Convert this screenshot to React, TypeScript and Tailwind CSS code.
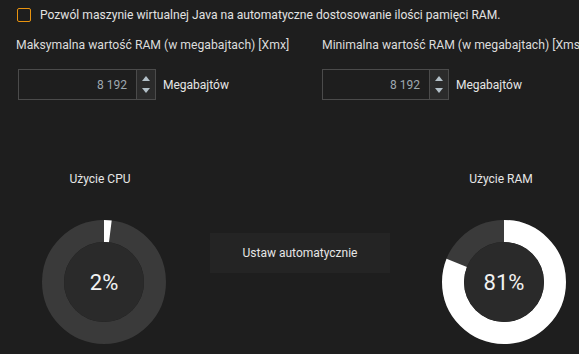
import React from 'react'

const Donut = ({ value }: { value: number }) => {
  const r = 51
  const c = 2 * Math.PI * r
  const len = (value / 100) * c
  return (
    <svg width="124" height="124" viewBox="0 0 124 124">
      <circle cx="62" cy="62" r={r} fill="none" stroke="#3a3a3a" strokeWidth="22" />
      <circle
        cx="62"
        cy="62"
        r={r}
        fill="none"
        stroke="#ffffff"
        strokeWidth="22"
        strokeDasharray={`${len} ${c}`}
        transform="rotate(-90 62 62)"
      />
      <circle cx="62" cy="62" r="40" fill="#2a2a2a" />
      <text
        x="62"
        y="62"
        textAnchor="middle"
        dominantBaseline="central"
        fill="#f2f2f2"
        fontSize="22"
        fontFamily="Roboto, sans-serif"
      >
        {value}%
      </text>
    </svg>
  )
}

const Spinner = () => (
  <div className="flex w-[19px] flex-col items-center justify-center gap-[7px] border-l border-[#4b4b4b] bg-[#2b2b2b]">
    <svg width="8" height="5" viewBox="0 0 8 5">
      <path d="M4 0 L8 5 L0 5 Z" fill="#b3c0c8" />
    </svg>
    <svg width="8" height="5" viewBox="0 0 8 5">
      <path d="M0 0 L8 0 L4 5 Z" fill="#b3c0c8" />
    </svg>
  </div>
)

const RamField = ({ label, width }: { label: string; width: string }) => (
  <div className="flex flex-col">
    <div className="h-[14px] whitespace-nowrap text-[12.2px] leading-[14px] text-[#dcdcdc]">{label}</div>
    <div className="mt-[17px] flex items-center">
      <div className={`flex h-[31px] ${width} border border-[#4b4b4b] bg-[#1e1e1e]`}>
        <div className="flex flex-1 items-center justify-end pr-[9px] text-[12px] text-[#9ea8b0]">8 192</div>
        <Spinner />
      </div>
      <span className="ml-[7px] text-[12px] text-[#e6e6e6]">Megabajtów</span>
    </div>
  </div>
)

export default function App() {
  return (
    <div
      className="relative h-[354px] w-[579px] overflow-hidden bg-[#1e1e1e]"
      style={{ fontFamily: 'Roboto, "Liberation Sans", sans-serif' }}
    >
      <div className="flex items-center pl-[17px] pt-[8px]">
        <div className="h-[14px] w-[14px] rounded-[2px] border border-[#e8930f]" />
        <span className="ml-[9px] whitespace-nowrap text-[12.1px] leading-[14px] text-[#e2e2e2]">
          Pozwól maszynie wirtualnej Java na automatyczne dostosowanie ilości pamięci RAM.
        </span>
      </div>

      <div className="mt-[16px] flex whitespace-nowrap">
        <div className="w-[322px] shrink-0 pl-[16px]">
          <RamField label="Maksymalna wartość RAM (w megabajtach) [Xmx]" width="w-[138px] ml-[2px]" />
        </div>
        <div>
          <RamField label="Minimalna wartość RAM (w megabajtach) [Xms]" width="w-[127px]" />
        </div>
      </div>

      <div className="mt-[72px] flex pl-[42px]">
        <div className="flex w-[124px] flex-col items-center">
          <div className="h-[14px] pr-[8px] text-[12px] leading-[14px] text-[#e6e6e6]">Użycie CPU</div>
          <div className="mt-[34px]">
            <Donut value={2} />
          </div>
        </div>
        <button className="ml-[44px] mt-[61px] flex h-[40px] w-[180px] items-center justify-center bg-[#242424] text-[12px] text-[#e6e6e6]">
          Ustaw automatycznie
        </button>
        <div className="ml-[52px] flex w-[124px] flex-col items-center">
          <div className="h-[14px] pr-[6px] text-[12px] leading-[14px] text-[#e6e6e6]">Użycie RAM</div>
          <div className="mt-[34px]">
            <Donut value={81} />
          </div>
        </div>
      </div>
    </div>
  )
}
